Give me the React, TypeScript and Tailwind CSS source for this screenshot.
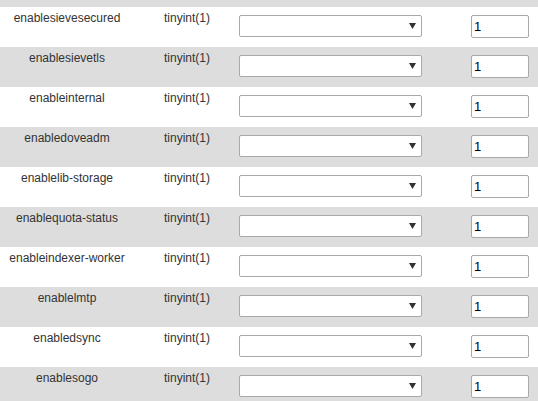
const rows = [
  'enablesievesecured',
  'enablesievetls',
  'enableinternal',
  'enabledoveadm',
  'enablelib-storage',
  'enablequota-status',
  'enableindexer-worker',
  'enablelmtp',
  'enabledsync',
  'enablesogo',
];

function FakeSelect() {
  return (
    <div className="mt-[8px] flex h-[22px] w-[183px] items-center justify-end rounded-[2px] border border-[#a9a9a9] bg-white pr-[5px]">
      <svg width="7" height="6" viewBox="0 0 7 6">
        <path d="M0 0 H7 L3.5 6 Z" fill="#333" />
      </svg>
    </div>
  );
}

export default function App() {
  return (
    <div
      className="w-[538px] bg-white text-[12px] leading-[14px] text-[#333]"
      style={{ fontFamily: '"Liberation Sans", Arial, sans-serif' }}
    >
      <div className="h-[7px] bg-[#dddddd]" />
      {rows.map((name, i) => (
        <div
          key={name}
          className={`flex h-[40px] items-start ${i % 2 === 1 ? 'bg-[#dddddd]' : 'bg-white'}`}
        >
          <div className="w-[134px] pt-[4px] text-center">{name}</div>
          <div className="ml-[30px] w-[75px] pt-[4px]">tinyint(1)</div>
          <FakeSelect />
          <input
            readOnly
            value="1"
            className="ml-[49px] mt-[8px] h-[23px] w-[58px] rounded-[2px] border border-[#a9a9a9] bg-white pl-[2px] text-[13px] text-black outline-none"
          />
        </div>
      ))}
    </div>
  );
}
